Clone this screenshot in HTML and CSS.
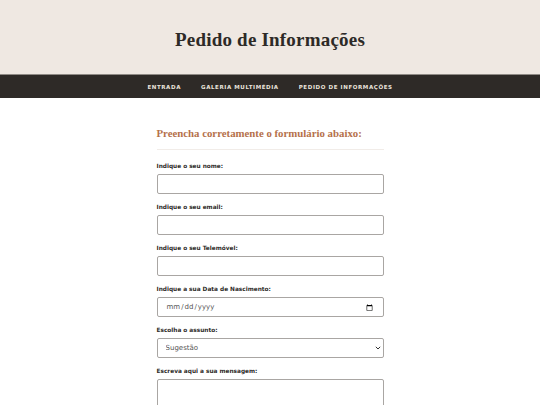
FILE: index.html
```html
<!DOCTYPE html>
<html lang="pt">
<head>
<meta charset="utf-8">
<title>Pedido de Informações</title>
<link rel="stylesheet" href="styles.css">
</head>
<body>
<header class="site-header">
  <h1 class="site-title">Pedido de Informações</h1>
</header>
<nav class="main-nav">
  <a href="#" class="nav-link">ENTRADA</a>
  <a href="#" class="nav-link">GALERIA MULTIMÉDIA</a>
  <a href="#" class="nav-link">PEDIDO DE INFORMAÇÕES</a>
</nav>
<main class="content">
  <h2 class="form-heading">Preencha corretamente o formulário abaixo:</h2>
  <hr class="divider">
  <form class="info-form">
    <div class="field">
      <label class="field-label" for="nome">Indique o seu nome:</label>
      <input class="field-input" id="nome" type="text">
    </div>
    <div class="field">
      <label class="field-label" for="email">Indique o seu email:</label>
      <input class="field-input" id="email" type="email">
    </div>
    <div class="field">
      <label class="field-label" for="tel">Indique o seu Telemóvel:</label>
      <input class="field-input" id="tel" type="tel">
    </div>
    <div class="field">
      <label class="field-label" for="nasc">Indique a sua Data de Nascimento:</label>
      <input class="field-input" id="nasc" type="date">
    </div>
    <div class="field">
      <label class="field-label" for="assunto">Escolha o assunto:</label>
      <div class="select-wrap">
        <select class="field-input field-select" id="assunto">
          <option>Sugestão</option>
          <option>Reclamação</option>
          <option>Informação</option>
        </select>
        <svg class="select-arrow" width="6" height="4" viewBox="0 0 6 4" aria-hidden="true"><path d="M0.8 0.8 L3 3 L5.2 0.8" fill="none" stroke="#333" stroke-width="1"/></svg>
      </div>
    </div>
    <div class="field">
      <label class="field-label" for="msg">Escreva aqui a sua mensagem:</label>
      <textarea class="field-input field-textarea" id="msg"></textarea>
    </div>
  </form>
</main>
</body>
</html>
```
FILE: styles.css
```css
html, body {
  margin: 0;
  padding: 0;
  background: #ffffff;
}
body {
  font-family: "DejaVu Sans", "Open Sans", sans-serif;
  color: #2d2a27;
}
.site-header {
  background: #efe8e2;
  height: 74px;
  display: flex;
  align-items: center;
  justify-content: center;
}
.site-title {
  margin: 6px 0 0;
  font-family: "Liberation Serif", "DejaVu Serif", serif;
  font-weight: bold;
  font-size: 19px;
  color: #2d2a27;
  letter-spacing: 0.2px;
}
.main-nav {
  background: #2e2a27;
  border-top: 1px solid #8f8a85;
  height: 23px;
  display: flex;
  justify-content: center;
  align-items: center;
  gap: 20px;
}
.nav-link {
  color: #e9e3dc;
  text-decoration: none;
  font-family: "DejaVu Sans", sans-serif;
  font-weight: bold;
  font-size: 5.5px;
  letter-spacing: 0.6px;
}
.content {
  width: 227px;
  margin: 0 auto;
  padding-top: 28px;
}
.form-heading {
  margin: 0;
  font-family: "Liberation Serif", "DejaVu Serif", serif;
  font-weight: bold;
  font-size: 10.8px;
  line-height: 14px;
  color: #b5714b;
  white-space: nowrap;
}
.divider {
  border: 0;
  border-top: 1px solid #f1ece8;
  margin: 9px 0 12px;
}
.field {
  margin-bottom: 9px;
}
.field-label {
  display: block;
  font-family: "DejaVu Sans", sans-serif;
  font-weight: bold;
  font-size: 5.8px;
  line-height: 8px;
  margin-bottom: 4px;
  color: #2d2a27;
}
.field-input {
  display: block;
  box-sizing: border-box;
  width: 100%;
  height: 20px;
  border: 1px solid #a9a6a3;
  border-radius: 2px;
  background: #ffffff;
  font-family: "DejaVu Sans", sans-serif;
  font-size: 7px;
  color: #555;
  padding: 0 8px;
  margin: 0;
}
.select-wrap {
  position: relative;
}
.field-select {
  appearance: none;
  -webkit-appearance: none;
}
.select-arrow {
  position: absolute;
  right: 3px;
  top: 8px;
}
.field-textarea {
  height: 40px;
  resize: none;
}
```
